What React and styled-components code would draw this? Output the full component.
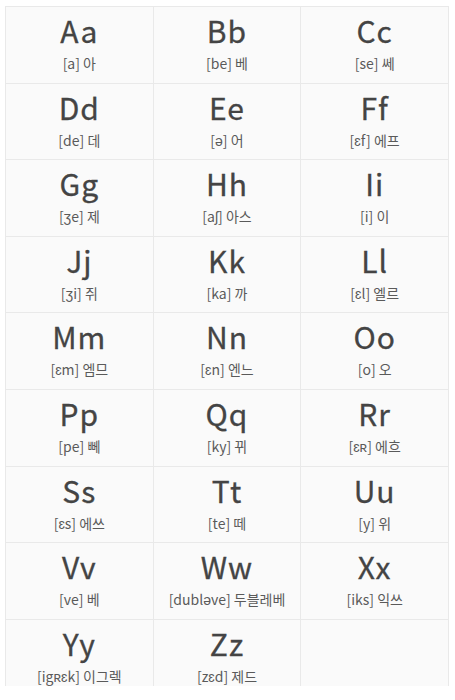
import React from "react";
import styled, { createGlobalStyle } from "styled-components";

const letters = [
  ["Aa", "[a] 아"],
  ["Bb", "[be] 베"],
  ["Cc", "[se] 쎄"],
  ["Dd", "[de] 데"],
  ["Ee", "[ə] 어"],
  ["Ff", "[ɛf] 에프"],
  ["Gg", "[ʒe] 제"],
  ["Hh", "[aʃ] 아스"],
  ["Ii", "[i] 이"],
  ["Jj", "[ʒi] 쥐"],
  ["Kk", "[ka] 까"],
  ["Ll", "[ɛl] 엘르"],
  ["Mm", "[ɛm] 엠므"],
  ["Nn", "[ɛn] 엔느"],
  ["Oo", "[o] 오"],
  ["Pp", "[pe] 뻬"],
  ["Qq", "[ky] 뀌"],
  ["Rr", "[ɛʀ] 에흐"],
  ["Ss", "[ɛs] 에쓰"],
  ["Tt", "[te] 떼"],
  ["Uu", "[y] 위"],
  ["Vv", "[ve] 베"],
  ["Ww", "[dubləve] 두블레베"],
  ["Xx", "[iks] 익쓰"],
  ["Yy", "[igʀɛk] 이그렉"],
  ["Zz", "[zɛd] 제드"],
  null,
];

const GlobalStyle = createGlobalStyle`
  body {
    margin: 0;
    background: #ffffff;
    font-family: "Noto Sans CJK KR", sans-serif;
  }
`;

const Frame = styled.div`
  margin: 6px 6px 0 5px;
  height: 680px;
  overflow: hidden;
`;

const Grid = styled.div`
  display: grid;
  grid-template-columns: repeat(3, 1fr);
  grid-auto-rows: 75.6px;
  gap: 1px;
  padding: 1px;
  background: #e9e9e9;
`;

const Cell = styled.div`
  background: #fafafa;
  display: flex;
  flex-direction: column;
  align-items: center;
  padding-top: 5px;
`;

const Letter = styled.div`
  font-size: 30px;
  line-height: 36px;
  color: #444;
  letter-spacing: 1px;
  -webkit-text-stroke: 0.3px #444;
`;

const Sound = styled.div`
  margin-top: 5px;
  font-size: 14px;
  line-height: 20px;
  color: #5a5a5a;
`;

export default function App() {
  return (
    <>
      <GlobalStyle />
      <Frame>
        <Grid>
          {letters.map((item, i) =>
            item ? (
              <Cell key={i}>
                <Letter>{item[0]}</Letter>
                <Sound>{item[1]}</Sound>
              </Cell>
            ) : (
              <Cell key={i} />
            )
          )}
        </Grid>
      </Frame>
    </>
  );
}
